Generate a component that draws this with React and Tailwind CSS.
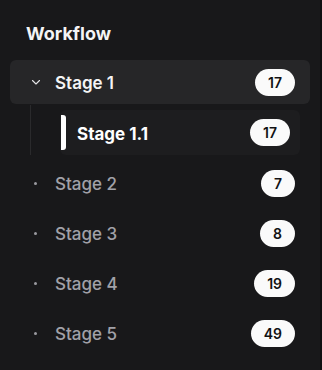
import React from 'react'

const stages = [
  { id: 2, name: 'Stage 2', count: 7 },
  { id: 3, name: 'Stage 3', count: 8 },
  { id: 4, name: 'Stage 4', count: 19 },
  { id: 5, name: 'Stage 5', count: 49 }
]

const Badge = ({ children }) => (
  <span className="flex h-[27px] items-center rounded-full bg-[#fafafa] px-[13px] text-[14px] font-semibold text-[#111113]">
    {children}
  </span>
)

const Chevron = () => (
  <svg width="12" height="12" viewBox="0 0 24 24" fill="none" stroke="#e4e4e7" strokeWidth="2.2" strokeLinecap="round" strokeLinejoin="round">
    <path d="m5 9 7 7 7-7" />
  </svg>
)

export default function App () {
  return (
    <div className="flex h-[370px] w-[322px] bg-[#0f0f10] font-['Inter',sans-serif]">
      <div className="h-full w-[320px] bg-[#18181a] px-[10px]">
        <h2 className="pl-4 pt-[22px] text-[18px] font-bold leading-[24px] text-[#f4f4f5]">Workflow</h2>

        <div className="mt-[14px] flex flex-col gap-[6px]">
          {/* open stage */}
          <div>
            <div className="flex h-[44px] items-center justify-between rounded-md bg-[#262628] pl-[20px] pr-[15px]">
              <div className="flex items-center">
                <Chevron />
                <span className="ml-[13px] mt-[4px] text-[17px] font-semibold text-[#f4f4f5]">Stage 1</span>
              </div>
              <Badge>17</Badge>
            </div>
            <div className="ml-5 mt-px border-l border-[#2a2a2c] pl-[29px] pr-[10px] pt-[5px]">
              <div className="flex h-[45px] items-center justify-between rounded-md bg-[#1d1d1f] pr-[10px]">
                <div className="flex items-center">
                  <span className="ml-px h-[35px] w-[5px] rounded-r-[3px] bg-white" />
                  <span className="ml-[11px] mt-[4px] text-[17px] font-bold text-white">Stage 1.1</span>
                </div>
                <Badge>17</Badge>
              </div>
            </div>
          </div>

          {stages.map(s => (
            <div key={s.id} className="flex h-[44px] items-center justify-between pl-[24px] pr-[15px]">
              <div className="flex items-center">
                <span className="h-[3px] w-[3px] rounded-full bg-[#9a9aa0]" />
                <span className="ml-[18px] mt-[4px] text-[17px] font-medium text-[#a1a1a8]">{s.name}</span>
              </div>
              <Badge>{s.count}</Badge>
            </div>
          ))}
        </div>
      </div>
    </div>
  )
}
